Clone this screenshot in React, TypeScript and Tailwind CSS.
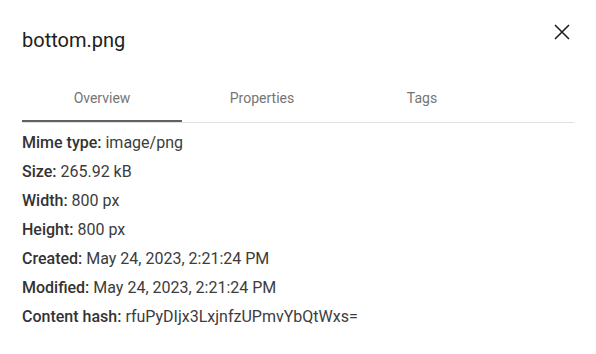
import { useState } from 'react';

const TABS = ['Overview', 'Properties', 'Tags'];

const ROWS: [string, string][] = [
	['Mime type', 'image/png'],
	['Size', '265.92 kB'],
	['Width', '800 px'],
	['Height', '800 px'],
	['Created', 'May 24, 2023, 2:21:24 PM'],
	['Modified', 'May 24, 2023, 2:21:24 PM'],
	['Content hash', 'rfuPyDIjx3LxjnfzUPmvYbQtWxs='],
];

export default function App() {
	const [tab, setTab] = useState('Overview');

	return (
		<div className="w-[596px] h-[354px] bg-white font-['Roboto',sans-serif] text-[#212121] px-[22px]">
			<div className="flex items-start justify-between pt-[26px] h-[74px]">
				<h2 className="text-[20px] leading-[28px] font-normal">bottom.png</h2>
				<button className="mt-[-2px] mr-[4px] w-4 h-4 flex items-center justify-center text-[#212121]">
					<svg viewBox="0 0 16 16" className="w-4 h-4" fill="none" stroke="currentColor" strokeWidth="1.6">
						<path d="M1 1L15 15M15 1L1 15" />
					</svg>
				</button>
			</div>
			<div className="flex border-b border-[#e0e0e0]">
				{TABS.map(t => (
					<button
						key={t}
						onClick={() => setTab(t)}
						className="relative w-[160px] h-[48px] text-[14px] text-[#757575]"
					>
						{t}
						{t === tab && <span className="absolute left-0 right-0 bottom-0 h-[2px] bg-[#616161]" />}
					</button>
				))}
			</div>
			<div className="pt-[5px] text-[16px] leading-[29px]">
				{ROWS.map(([label, value]) => (
					<div key={label}>
						<span className="font-medium text-[#333]">{label}:</span> <span className="text-[#3c3c3c]">{value}</span>
					</div>
				))}
			</div>
		</div>
	);
}
